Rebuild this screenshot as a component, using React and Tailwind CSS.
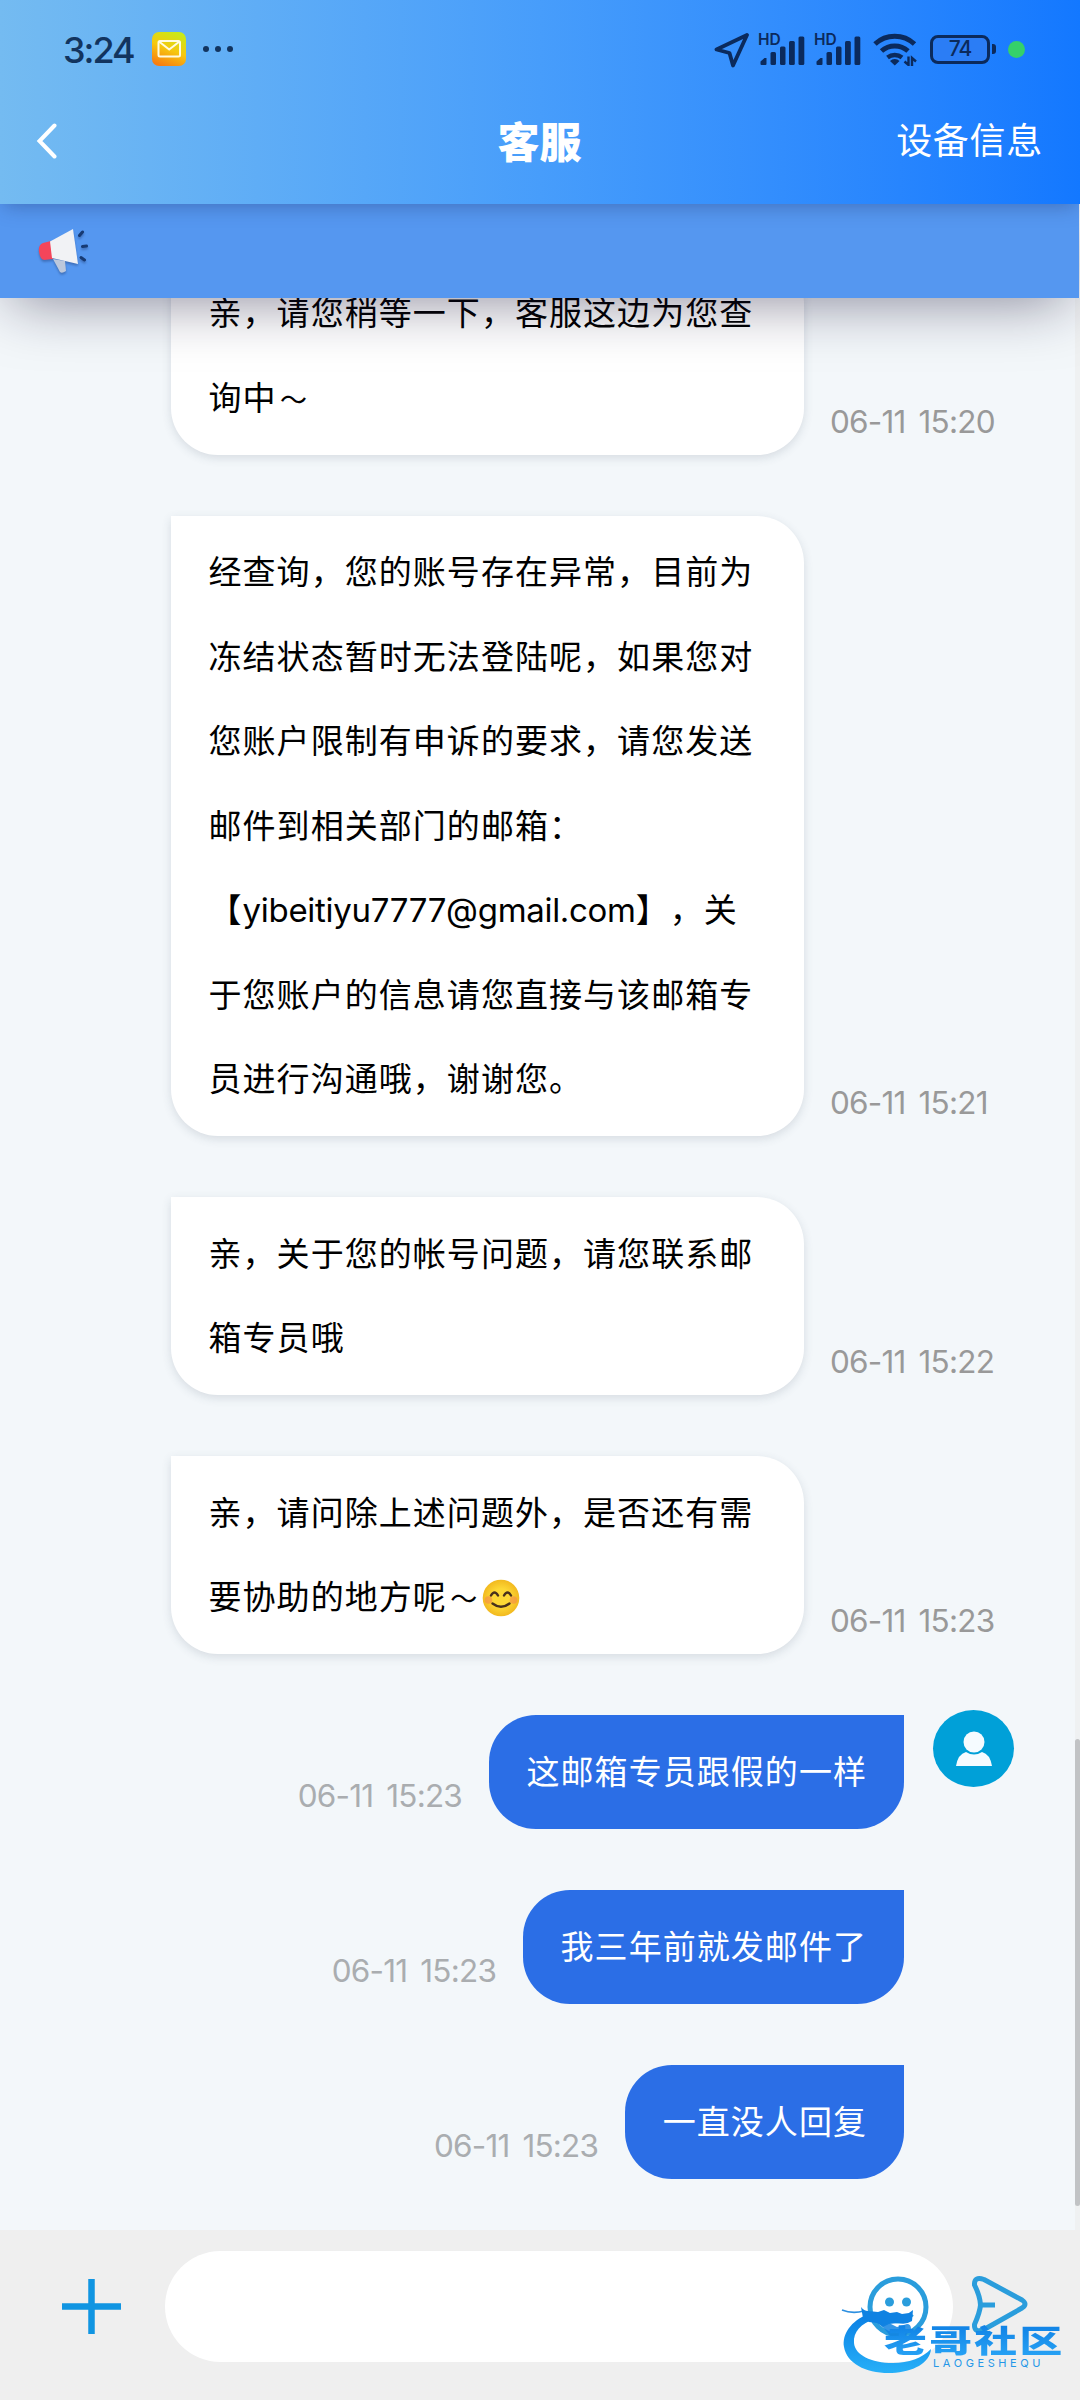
import clsx from 'clsx';

const agentMessages = [
  { id: 1, time: '06-11 15:20', lines: ['亲，请您稍等一下，客服这边为您查', '询中'], tilde: true },
  {
    id: 2,
    time: '06-11 15:21',
    lines: [
      '经查询，您的账号存在异常，目前为',
      '冻结状态暂时无法登陆呢，如果您对',
      '您账户限制有申诉的要求，请您发送',
      '邮件到相关部门的邮箱：',
      '【yibeitiyu7777@gmail.com】，关',
      '于您账户的信息请您直接与该邮箱专',
      '员进行沟通哦，谢谢您。',
    ],
  },
  { id: 3, time: '06-11 15:22', lines: ['亲，关于您的帐号问题，请您联系邮', '箱专员哦'] },
  { id: 4, time: '06-11 15:23', lines: ['亲，请问除上述问题外，是否还有需', '要协助的地方呢'], tilde: true, smile: true },
];

const userMessages = [
  { id: 5, time: '06-11 15:23', text: '这邮箱专员跟假的一样', avatar: true },
  { id: 6, time: '06-11 15:23', text: '我三年前就发邮件了' },
  { id: 7, time: '06-11 15:23', text: '一直没人回复' },
];

// Señal del móvil con la etiqueta HD
function Signal() {
  return (
    <div className="relative h-[34px] w-[47px]">
      <span className="absolute left-0 top-[-2px] text-[15.500px] font-semibold leading-[20px] text-[#0b2a5c]">HD</span>
      <svg width="47" height="34" viewBox="0 0 47 34" fill="#0b2a5c">
        <path d="M2.500 32v-2.500l4-3.500h2v6a1 1 0 0 1-1 1h-4a1 1 0 0 1-1-1z" />
        <rect x="12.500" y="20" width="5.500" height="13" rx="1.500" />
        <rect x="22" y="14.500" width="5.500" height="18.500" rx="1.500" />
        <rect x="31" y="9" width="5.800" height="24" rx="1.500" />
        <rect x="40.500" y="4.500" width="5.800" height="28.500" rx="1.500" />
      </svg>
    </div>
  );
}

function StatusBar() {
  return (
    <div className="flex h-[98px] items-center pl-[63px] pr-[55px]">
      <span className="w-[89px] whitespace-nowrap pt-[2px] text-[36px] font-medium tracking-[-2px] text-[#12345f]">3:24</span>
      <svg width="34" height="34" viewBox="0 0 34 34">
        <defs>
          <linearGradient id="mail" x1="0.700" y1="0" x2="0.300" y2="1">
            <stop offset="0" stopColor="#c9ea18" />
            <stop offset="0.500" stopColor="#f6c80f" />
            <stop offset="1" stopColor="#f77d12" />
          </linearGradient>
        </defs>
        <rect width="34" height="34" rx="7" fill="url(#mail)" />
        <g fill="none" stroke="#fffbe0" strokeWidth="2">
          <rect x="6.500" y="9" width="21.500" height="15.500" rx="1.500" />
          <path d="M7 9.500l10.200 8 10.300-8" />
        </g>
      </svg>
      <div className="ml-[17px] flex gap-[6px]">
        <span className="size-[6px] rounded-full bg-[#12345f]" />
        <span className="size-[6px] rounded-full bg-[#12345f]" />
        <span className="size-[6px] rounded-full bg-[#12345f]" />
      </div>

      <div className="ml-auto flex items-center">
        <svg width="36" height="36" viewBox="0 0 36 36" fill="none" stroke="#0b2a5c" strokeWidth="3.800" strokeLinejoin="round" className="mr-[8px] mt-[2px]">
          <path d="M33 3L2.500 17.500l13 3.500 3.500 12.500z" />
        </svg>
        <div className="mr-[12px] flex gap-[9px]">
          <Signal />
          <Signal />
        </div>
        <svg width="44" height="34" viewBox="0 0 44 34" fill="none" stroke="#0b2a5c" strokeWidth="5" className="mr-[13px]">
          <path d="M2 12a29 29 0 0 1 39.500 0" />
          <path d="M8.500 19a20 20 0 0 1 26.500 0" />
          <path d="M14.500 25.500a12 12 0 0 1 14.500 0" strokeWidth="4.500" />
          <path d="M17 29a6.500 6.500 0 0 1 9.500 0l-4.700 4.500z" fill="#0b2a5c" stroke="none" />
          <g strokeWidth="2.400">
            <path d="M35.500 24.500v8.500l-4-3.500" />
            <path d="M39 34.500v-8.500l4 3.500" />
          </g>
        </svg>
        <div className="flex h-[29px] w-[60px] items-center justify-center rounded-[8px] border-[3px] border-[#0b2a5c] bg-[#2b7df5] text-[21px] font-medium tracking-[-1px] text-[#0b2a5c]">
          74
        </div>
        <span className="ml-[2px] mr-[12px] h-[10px] w-[4px] rounded-r-[3px] bg-[#0b2a5c]" />
        <span className="size-[17px] rounded-full bg-[#35d16a]" />
      </div>
    </div>
  );
}

function Header() {
  return (
    <header className="relative z-30 h-[204px] shrink-0 bg-gradient-to-r from-[#74bbf1] via-[#479dfb] to-[#1378ff] shadow-[0_6px_18px_-4px_rgba(30,40,90,0.35)]">
      <StatusBar />
      <div className="grid h-[86px] grid-cols-3 items-center pl-[36px] pr-[37px] text-white">
        <svg width="22" height="36" viewBox="0 0 22 36" fill="none" stroke="white" strokeWidth="4" strokeLinecap="round">
          <path d="M18.500 2.500L3.500 18l15 15.500" />
        </svg>
        <h1 className="pt-[3px] text-center text-[42px] font-black leading-none">客服</h1>
        <span className="whitespace-nowrap text-right text-[36px] leading-none tracking-[0.7px]">设备信息</span>
      </div>
    </header>
  );
}

function Notice() {
  return (
    <div className="relative z-20 mr-px flex h-[94px] shrink-0 items-center bg-[#5597f0] pl-[38px] shadow-[0_14px_60px_-12px_rgba(20,15,50,0.5)]">
      <svg width="52" height="46" viewBox="0 0 52 46" className="mt-[2px] drop-shadow-[0_2px_1px_rgba(20,40,90,0.35)]">
        <path d="M15 30l12 2 1 10q-4 3-6 1z" fill="#bcc8dc" />
        <path d="M13 12L5 14q-5 2-4 9 1 7 5 8l9-1z" fill="#f4455a" />
        <path d="M12 12.500L35 0l5 35-26-6z" fill="#f1f2f5" />
        <g stroke="#173a73" strokeWidth="3" strokeLinecap="round">
          <path d="M41.500 6.500l3-3.500M44.500 17.500l4-.500M43 28.500l3.500 2.500" />
        </g>
      </svg>
    </div>
  );
}

function SmileEmoji() {
  return (
    <svg width="38" height="38" viewBox="0 0 38 38" className="ml-px inline-block align-[-8px]">
      <defs>
        <radialGradient id="face">
          <stop offset="0.500" stopColor="#fdd835" />
          <stop offset="1" stopColor="#f2b91f" />
        </radialGradient>
      </defs>
      <circle cx="19" cy="19" r="18.300" fill="url(#face)" />
      <circle cx="6.500" cy="21" r="3.800" fill="#f58a4b" opacity="0.600" />
      <circle cx="31.500" cy="21" r="3.800" fill="#f58a4b" opacity="0.600" />
      <g fill="none" stroke="#49311c" strokeWidth="2.400" strokeLinecap="round">
        <path d="M9 16.500q3.500-6 7 0M22 16.500q3.500-6 7 0" />
        <path d="M10.500 24.500q8.500 6.500 17 0" />
      </g>
    </svg>
  );
}

// El correo va un poco más apretado que el texto chino
function Line({ text }) {
  const match = text.match(/[\w.]+@[\w.]+/);
  if (!match) return text;
  const [before, after] = text.split(match[0]);
  return (
    <>
      {before}
      <span className="tracking-[-0.3px]">{match[0]}</span>
      {after}
    </>
  );
}

function AgentMessage({ message }) {
  return (
    <div className="flex items-end pl-[171px]">
      <div className="w-[633px] shrink-0 rounded-[47px] rounded-tl-none bg-white py-[14.5px] pl-[37.500px] text-[33px] leading-[84.5px] tracking-[1.05px] text-black shadow-[0_3px_10px_rgba(60,80,100,0.16)] [text-spacing-trim:space-all]">
        {message.lines.map((line, i) => {
          const last = i === message.lines.length - 1;
          return (
            <p key={line} className="h-[84.5px] whitespace-nowrap">
              <Line text={line} />
              {message.tilde && last && <span className="inline-block w-[34px] text-center text-[27px] tracking-normal">～</span>}
              {message.smile && last && <SmileEmoji />}
            </p>
          );
        })}
      </div>
      <time className="mb-[14px] ml-[26px] whitespace-nowrap text-[31.500px] leading-[38px] tracking-[-0.8px] text-[#999] [word-spacing:5px]">{message.time}</time>
    </div>
  );
}

function UserMessage({ message }) {
  return (
    <div className="relative flex items-end justify-end pr-[176px]">
      <time className="mb-[14px] mr-[27px] whitespace-nowrap text-[31.500px] leading-[38px] tracking-[-0.8px] text-[#aaadb0] [word-spacing:5px]">{message.time}</time>
      <div className="h-[114px] rounded-[47px] rounded-tr-none bg-[#2b6ee6] pl-[37.500px] pr-[37px] text-[33px] leading-[114px] tracking-[1.05px] text-white">
        {message.text}
      </div>
      {message.avatar && (
        <div className="absolute right-[66px] top-[-5px] flex h-[77px] w-[81px] items-center justify-center rounded-[50%] bg-[#00a0d8]">
          <svg width="36" height="36" viewBox="0 0 36 36" fill="#f5fbff">
            <ellipse cx="18" cy="11" rx="10.500" ry="10.500" />
            <path d="M0 35q2-12 10-14 8 5 16 0 8 2 10 14z" />
          </svg>
        </div>
      )}
    </div>
  );
}

// Marca de la comunidad superpuesta en la esquina inferior
function Watermark() {
  return (
    <div className="absolute right-[15px] top-[78px] h-[66px] w-[224px]">
      <svg width="224" height="72" viewBox="0 0 224 72" className="absolute left-0 top-0 overflow-visible">
        <defs>
          <linearGradient id="swoosh" x1="0" y1="0" x2="0" y2="1">
            <stop offset="0" stopColor="#0a7fe4" />
            <stop offset="1" stopColor="#27b0f8" />
          </linearGradient>
        </defs>
        <path d="M27 6C10 13 1 26 3 39c3 17 23 27 48 26 21-1 38-10 39-24-9 9-22 14-38 14C30 55 14 47 13 35 12 24 20 15 34 11z" fill="url(#swoosh)" />
        <path d="M1 2q10 4 22 1" fill="none" stroke="#2d8fe0" strokeWidth="1.800" />
        <path d="M20-1q3 4 7 4l10 1 6-2 6 3 7-1 5 2 7-1 4-3-1 11q-6 4-14 2l-9 1-6 3-6-4-8-1-6-4z" fill="#0f82e2" />
        <path d="M40 17l8-2 8 4 10-3q4 0 4 5l-8 10H52z" fill="#1284e2" opacity="0.850" />
      </svg>
      <div className="absolute left-[43px] top-[14px] origin-left scale-x-[1.38] whitespace-nowrap bg-gradient-to-b from-[#0e7fe4] to-[#2aa6f6] bg-clip-text text-[31px] font-black leading-[38px] tracking-[1.7px] text-transparent">
        老哥社区
      </div>
      <div className="absolute left-[92px] top-[49px] whitespace-nowrap text-[11px] leading-[12px] tracking-[3.600px] text-[#2497e8]">LAOGESHEQU</div>
    </div>
  );
}

function Composer() {
  return (
    <footer className="relative flex h-[170px] shrink-0 items-start bg-[#efefef] pt-[21px]">
      <svg width="60" height="56" viewBox="0 0 60 56" stroke="#1095e2" strokeWidth="6.500" className="ml-[62px] mt-[28px]">
        <path d="M0 27.500h59M29.500 0v55" />
      </svg>
      <div className="ml-[43px] flex h-[111px] w-[788px] items-center justify-end rounded-full bg-white pr-[24px]">
        <svg width="62" height="62" viewBox="0 0 62 62" fill="none" stroke="#2a9ddc" strokeWidth="5">
          <circle cx="31" cy="31" r="28" />
          <circle cx="22.500" cy="26" r="4.500" fill="#2a9ddc" stroke="none" />
          <circle cx="39.500" cy="26" r="4.500" fill="#2a9ddc" stroke="none" />
          <path d="M17 38q14 14 28 0" />
        </svg>
      </div>
      <svg width="56" height="60" viewBox="0 0 56 60" fill="none" stroke="#2a9ddc" strokeWidth="5" strokeLinejoin="round" strokeLinecap="round" className="ml-[19px] mt-[25px]">
        <path d="M12 3.500L50 24q6 4 0 8L12 53.500q-10 4-9.500-5Q8 36 8.500 29 8 20 2.500 9 2 0 12 3.500z" />
        <path d="M8.500 29H23" strokeLinecap="butt" />
      </svg>
      <Watermark />
    </footer>
  );
}

export default function App() {
  return (
    <div
      lang="zh-CN"
      className={clsx(
        'flex h-[2400px] w-[1080px] flex-col overflow-hidden bg-[#f3f7fa]',
        "font-[Inter,'Noto_Sans_CJK_SC',sans-serif]"
      )}
    >
      <Header />
      <Notice />
      <main className="relative flex min-h-0 flex-1 flex-col justify-end gap-[61px] overflow-hidden pb-[51px]">
        {agentMessages.map((m) => (
          <AgentMessage key={m.id} message={m} />
        ))}
        {userMessages.map((m) => (
          <UserMessage key={m.id} message={m} />
        ))}
        {/* Barra de desplazamiento */}
        <div className="absolute inset-y-0 right-0 flex w-[5px] flex-col justify-end bg-[#eff1f2] pb-[24px]">
          <span className="h-[467px] rounded-full bg-[#c1c3c5]" />
        </div>
      </main>
      <Composer />
    </div>
  );
}
